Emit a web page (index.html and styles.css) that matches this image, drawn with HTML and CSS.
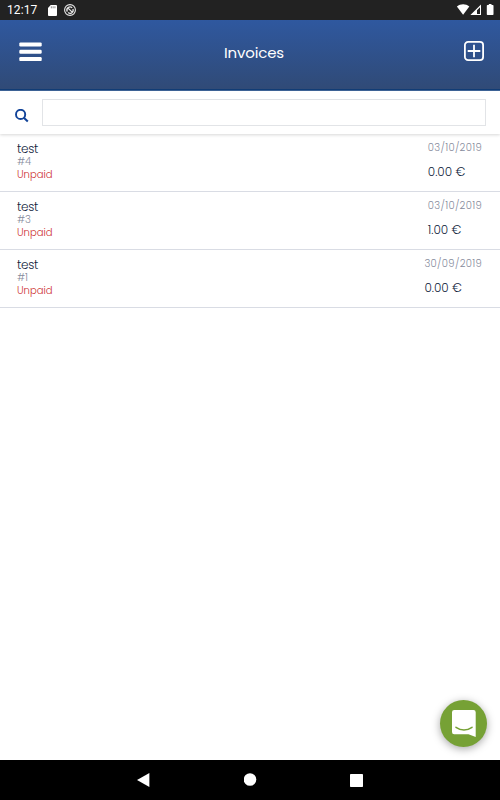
FILE: index.html
```html
<!DOCTYPE html>
<html lang="en">
<head>
    <meta charset="UTF-8">
    <meta name="viewport" content="width=device-width, initial-scale=1.0">
    <link rel="stylesheet" href="styles.css">
    <title>Invoices</title>
</head>
<body>
    <div class="status-bar">
        <span class="clock">12:17</span>
        <svg class="sd" width="9" height="11" viewBox="0 0 10 11" preserveAspectRatio="none"><path fill="#fff" d="M3 0h6a1 1 0 0 1 1 1v9a1 1 0 0 1-1 1H1a1 1 0 0 1-1-1V3z"/><path stroke="#777" stroke-width=".9" d="M3.700 1.300v2M5.700 1.300v2M7.700 1.300v2"/></svg>
        <svg class="app" width="12" height="12" viewBox="0 0 12 12" fill="none" stroke="#e8e8e8"><circle cx="6" cy="6" r="5.400" stroke-width="1.100"/><path stroke-width="1.300" d="M3.300 7.600a3.100 3.100 0 0 1 4.900-3.700M8.900 5a3.100 3.100 0 0 1-4.800 3.600M3.500 3.600l5.200 5"/></svg>
        <svg class="signals" width="38" height="12" viewBox="0 0 38 12">
            <path fill="#fff" d="M.9 2.400C4.500-.4 9.700-.4 13.300 2.400L7.100 10.800z"/>
            <path fill="#fff" fill-rule="evenodd" d="M25 .6V11H14.400zM24 3.200L21 6.200V10H24z"/>
            <path fill="#fff" d="M31.500 1h1.300V0h2.700v1h1.300q.7 0 .7.700v8.600q0 .7-.7.700h-5.300q-.7 0-.7-.7V1.700q0-.7.700-.7z"/>
        </svg>
    </div>

    <header class="header">
        <button class="icon-button" aria-label="Menu">
            <svg width="23" height="21" viewBox="0 0 23 21" fill="#fff"><rect x=".3" y="1.400" width="22.400" height="4.100" rx="1.200"/><rect x=".3" y="8.700" width="22.400" height="4.100" rx="1.200"/><rect x=".3" y="16" width="22.400" height="4.100" rx="1.200"/></svg>
        </button>
        <h1>Invoices</h1>
        <button class="icon-button" aria-label="New invoice">
            <svg width="20" height="20" viewBox="0 0 20 20" fill="none" stroke="#fff"><rect x=".9" y=".9" width="18.200" height="18.200" rx="3.200" stroke-width="1.800"/><path stroke-width="1.800" d="M10 3.700v12.600M3.700 10h12.600"/></svg>
        </button>
    </header>

    <div class="search">
        <svg width="14" height="14" viewBox="0 0 14 14" fill="none" stroke="#114399"><circle cx="5.600" cy="5.400" r="4.600" stroke-width="1.900"/><path stroke-width="2.100" d="M8.800 8.700l4 3.700"/></svg>
        <input type="text" aria-label="Search">
    </div>

    <main class="invoices">
        <div class="invoice">
            <div class="details">
                <div class="client">test</div>
                <div class="number">#4</div>
                <div class="unpaid">Unpaid</div>
            </div>
            <div class="summary">
                <div class="date">03/10/2019</div>
                <div class="amount">0.00 €</div>
            </div>
        </div>
        <div class="invoice">
            <div class="details">
                <div class="client">test</div>
                <div class="number">#3</div>
                <div class="unpaid">Unpaid</div>
            </div>
            <div class="summary">
                <div class="date">03/10/2019</div>
                <div class="amount">1.00 €</div>
            </div>
        </div>
        <div class="invoice">
            <div class="details">
                <div class="client">test</div>
                <div class="number">#1</div>
                <div class="unpaid">Unpaid</div>
            </div>
            <div class="summary">
                <div class="date">30/09/2019</div>
                <div class="amount">0.00 €</div>
            </div>
        </div>
    </main>

    <button class="chat" aria-label="Chat">
        <svg width="24" height="27" viewBox="0 0 24 27"><path fill="#fff" d="M2.200 0h19.300A2.200 2.200 0 0 1 23.700 2.200V27l-7.200-2.800H2.200A2.200 2.200 0 0 1 0 22V2.200A2.200 2.200 0 0 1 2.200 0z"/><path fill="none" stroke="#76a135" stroke-width="1.600" stroke-linecap="round" d="M4 17.300q8 5.400 16 0"/></svg>
    </button>

    <nav class="nav-bar">
        <svg width="13" height="14" viewBox="0 0 13 14"><path fill="#fff" d="M12.400 0v14L0 7z"/></svg>
        <svg width="13" height="14" viewBox="0 0 13 14"><circle cx="6" cy="6.500" r="6.300" fill="#fff"/></svg>
        <svg width="13" height="13" viewBox="0 0 13 13"><rect width="13" height="13" rx=".7" fill="#fff"/></svg>
    </nav>
</body>
</html>
```
FILE: styles.css
```css
* {
    box-sizing: border-box;
}

body {
    font-family: Poppins, 'Inter', sans-serif;
    font-weight: 300;
    background-color: #fff;
    color: #101d3c;
    display: flex;
    flex-direction: column;
    height: 100vh;
    margin: 0;
    overflow: hidden;
}

svg {
    display: block;
    flex: none;
}

button {
    border: none;
    padding: 0;
    background: none;
    cursor: pointer;
}

.status-bar {
    display: flex;
    align-items: center;
    flex: none;
    height: 20px;
    padding: 0 6px 0 7px;
    background-color: #222;
    color: #fff;
}

.clock {
    width: 41px;
    font: 400 12px/20px Roboto, sans-serif;
    letter-spacing: 0.1px;
}

.app {
    margin-left: 7px;
}

.signals {
    margin-left: auto;
    margin-top: -1px;
}

.header {
    display: flex;
    justify-content: space-between;
    flex: none;
    height: 71px;
    padding: 21px 16px 0 19px;
    background: linear-gradient(#2f589f, #304a76);
    border-bottom: 1px solid #3f659a;
    box-shadow: inset 0 -1px 0 #123d76;
}

.header h1 {
    margin: 0 0 0 2px;
    color: #fff;
    font-size: 15px;
    font-weight: 400;
    line-height: 23px;
    letter-spacing: -0.15px;
}

.icon-button {
    height: 20px;
}

.search {
    display: flex;
    flex: none;
    height: 43px;
    padding: 8px 14px 0 15px;
    gap: 13px;
    box-shadow: 0 1px 3px rgba(0, 0, 0, 0.16);
}

.search svg {
    margin-top: 10px;
}

.search input {
    flex: 1;
    height: 27px;
    border: 1px solid #e2e4e7;
    outline: none;
}

.invoices {
    flex: 1;
}

.invoice {
    display: flex;
    justify-content: space-between;
    height: 58px;
    padding: 6px 18px 0 17px;
    border-bottom: 1px solid #d9dce4;
}

.client {
    padding-top: 3px;
    font-size: 12px;
    line-height: 12px;
    letter-spacing: -0.25px;
}

.number,
.unpaid {
    font-size: 10px;
    line-height: 13px;
}

.number,
.date {
    color: #858a9b;
}

.unpaid {
    color: #cc2f2f;
}

.summary {
    white-space: nowrap;
}

.date {
    padding-top: 1px;
    font-size: 10px;
    line-height: 14px;
    letter-spacing: 0.33px;
}

.amount {
    margin-top: 8px;
    font-size: 12px;
    line-height: 17px;
}

.chat {
    position: absolute;
    right: 13px;
    bottom: 53px;
    display: flex;
    align-items: center;
    justify-content: center;
    width: 47px;
    height: 47px;
    border-radius: 50%;
    background-color: #76a135;
    box-shadow: 0 2px 8px rgba(0, 0, 0, 0.35);
}

.nav-bar {
    display: flex;
    align-items: center;
    justify-content: space-between;
    flex: none;
    height: 40px;
    padding: 0 137px;
    background-color: #000;
}
```
